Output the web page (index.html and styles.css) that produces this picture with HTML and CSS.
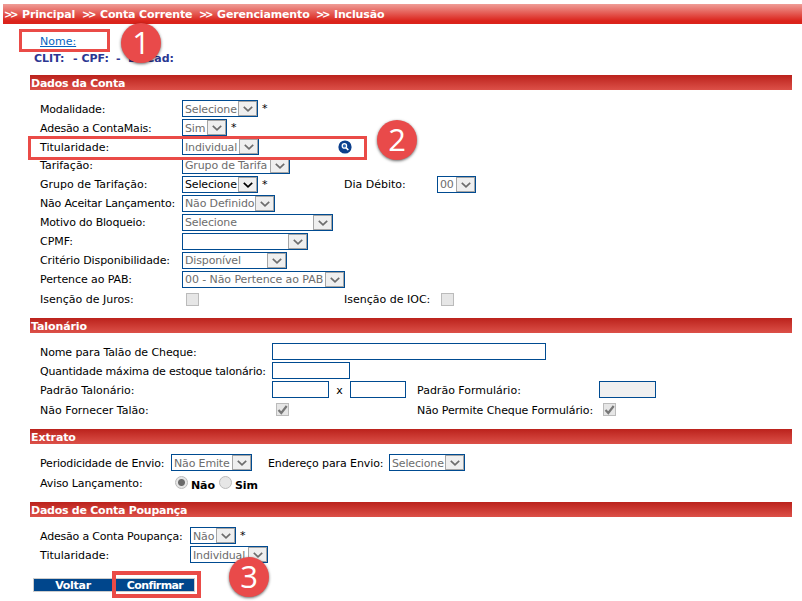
FILE: index.html
```html
<!DOCTYPE html>
<html lang="pt-BR">
<head>
<meta charset="utf-8">
<title>Inclusão</title>
<link rel="stylesheet" href="styles.css">
</head>
<body>
<svg class="defs" width="0" height="0"><defs>
<symbol id="chev" viewBox="0 0 10 6"><path d="M.8.8 5 4.8 9.2.8" fill="none" stroke="currentColor" stroke-width="1.7"/></symbol>
<symbol id="tick" viewBox="0 0 13 13"><path d="M2.5 7 5.3 10 10.7 3" fill="none" stroke="#777" stroke-width="2.2"/></symbol>
</defs></svg>
<nav class="crumbs"><i>&gt;&gt;</i><b class="c1">Principal</b><i>&gt;&gt;</i><b class="c2">Conta Corrente</b><i>&gt;&gt;</i><b class="c3">Gerenciamento</b><i>&gt;&gt;</i><b class="c4">Inclusão</b></nav>
<header class="client">
  <a>Nome:</a>
  <p><span>CLIT:</span><span>- CPF:</span><span>-</span><span>Dt Cad:</span></p>
</header>
<main>
<section class="conta">
  <h2>Dados da Conta</h2>
  <div class="row"><label class="t2">Modalidade:</label><div><span class="sel w76">Selecione<em><svg><use href="#chev"/></svg></em></span><s>*</s></div></div>
  <div class="row"><label class="t2">Adesão a ContaMais:</label><div><span class="sel w45">Sim<em><svg><use href="#chev"/></svg></em></span><s>*</s></div></div>
  <div class="row"><label>Titularidade:</label><div><span class="sel w77">Individual<em><svg><use href="#chev"/></svg></em></span></div>
    <svg class="lens" viewBox="0 0 14 14"><circle cx="7" cy="7" r="6.6" fill="#0b3f8c"/><circle cx="6.4" cy="5.9" r="2.2" fill="#2d68b4" stroke="#fff" stroke-width="1.2"/><path d="M8 7.6 10.3 10" stroke="#fff" stroke-width="1.6"/></svg></div>
  <div class="row"><label>Tarifação:</label><div><span class="sel w108">Grupo de Tarifa<em><svg><use href="#chev"/></svg></em></span></div></div>
  <div class="row"><label>Grupo de Tarifação:</label><div><span class="sel on w76">Selecione<em><svg><use href="#chev"/></svg></em></span><s>*</s></div><label>Dia Débito:</label><div><span class="sel w39">00<em><svg><use href="#chev"/></svg></em></span></div></div>
  <div class="row"><label class="t2">Não Aceitar Lançamento:</label><div><span class="sel w93">Não Definido<em><svg><use href="#chev"/></svg></em></span></div></div>
  <div class="row"><label class="t2">Motivo do Bloqueio:</label><div><span class="sel w151">Selecione<em><svg><use href="#chev"/></svg></em></span></div></div>
  <div class="row"><label>CPMF:</label><div><span class="sel w126"><em><svg><use href="#chev"/></svg></em></span></div></div>
  <div class="row"><label class="t1">Critério Disponibilidade:</label><div><span class="sel w105">Disponível<em><svg><use href="#chev"/></svg></em></span></div></div>
  <div class="row"><label class="t1">Pertence ao PAB:</label><div><span class="sel pab w163">00 - Não Pertence ao PAB<em><svg><use href="#chev"/></svg></em></span></div></div>
  <div class="row last"><label>Isenção de Juros:</label><div><span class="check"></span></div><label>Isenção de IOC:</label><div><span class="check"></span></div></div>
</section>
<section class="talonario">
  <h2>Talonário</h2>
  <div class="row"><label class="t1">Nome para Talão de Cheque:</label><div><span class="box w274"></span></div></div>
  <div class="row"><label class="t2">Quantidade máxima de estoque talonário:</label><div><span class="box w78"></span></div></div>
  <div class="row"><label>Padrão Talonário:</label><div><span class="box w57"></span><span class="times">x</span><span class="box w56"></span></div><label>Padrão Formulário:</label><div><span class="box off w57"></span></div></div>
  <div class="row last"><label>Não Fornecer Talão:</label><div><span class="check"><svg><use href="#tick"/></svg></span></div><label class="t1">Não Permite Cheque Formulário:</label><div><span class="check"><svg><use href="#tick"/></svg></span></div></div>
</section>
<section class="extrato">
  <h2>Extrato</h2>
  <div class="row"><label class="t2">Periodicidade de Envio:</label><div><span class="sel w81">Não Emite<em><svg><use href="#chev"/></svg></em></span></div><label class="t1">Endereço para Envio:</label><div><span class="sel w76">Selecione<em><svg><use href="#chev"/></svg></em></span></div></div>
  <div class="row last"><label class="t1">Aviso Lançamento:</label><div class="radios"><span class="radio on"></span><b>Não</b><span class="radio"></span><b>Sim</b></div></div>
</section>
<section class="poupanca">
  <h2>Dados de Conta Poupança</h2>
  <div class="row"><label class="t2">Adesão a Conta Poupança:</label><div><span class="sel w46">Não<em><svg><use href="#chev"/></svg></em></span><s>*</s></div></div>
  <div class="row"><label>Titularidade:</label><div><span class="sel w78">Individual<em><svg><use href="#chev"/></svg></em></span></div></div>
</section>
<div class="actions"><button>Voltar</button><button class="confirm">Confirmar</button></div>
</main>
<div class="frame f1"></div><div class="frame f2"></div><div class="frame f3"></div>
<div class="badge b1">1</div><div class="badge b2">2</div><div class="badge b3">3</div>
</body>
</html>
```
FILE: styles.css
```css
* { box-sizing: border-box; }
body {
  margin: 0;
  padding: 4px 0 0 3px;
  height: 601px;
  overflow: hidden;
  position: relative;
  background: #fff;
  color: #000;
  font: 11px/19px "DejaVu Sans", sans-serif;
  white-space: nowrap;
}
.defs { position: absolute; }
i, em { font-style: normal; }
s { text-decoration: none; margin-left: 4px; }
.crumbs {
  display: flex;
  height: 20px;
  padding-left: 1px;
  line-height: 21px;
  font-weight: bold;
  color: #fff;
  background: linear-gradient(#ef9d97, #db231b 85%);
}
.crumbs i { width: 18px; font-size: 10px; letter-spacing: -2.5px; }
.crumbs b { letter-spacing: -.15px; }
.c1 { width: 60px; }
.c2 { width: 99px; }
.c3 { width: 99px; }
.client { height: 51px; padding: 9px 0 0 31px; }
.client a {
  display: block;
  margin-left: 6px;
  line-height: 17px;
  color: #0563c1;
  text-decoration: underline;
}
.client p {
  display: flex;
  margin: 0;
  line-height: 17px;
  font-weight: bold;
  color: #2c3792;
}
.client p span:nth-child(1) { width: 39px; }
.client p span:nth-child(2) { width: 43px; }
.client p span:nth-child(3) { width: 12px; }
main { padding-left: 27px; }
h2 {
  width: 762px;
  height: 15px;
  margin: 0 0 9px;
  padding-left: 1px;
  font-size: 11px;
  line-height: 17px;
  letter-spacing: -.25px;
  color: #fff;
  background: linear-gradient(#bb221c, #dc5048);
}
.talonario h2, .extrato h2 { letter-spacing: -.1px; }
.row {
  display: grid;
  grid-template-rows: 19px;
  height: 19px;
  padding-left: 10px;
  align-items: center;
}
.row > div { display: flex; align-items: center; height: 19px; }
.row > label { padding-top: 2px; line-height: 17px; }
.row > .t1 { letter-spacing: -.1px; }
.row > .t2 { letter-spacing: -.19px; }
.conta { height: 243px; }
.conta .row { grid-template-columns: 142px 162px 93px 1fr; }
.conta .row:nth-of-type(n+4) > label { padding-top: 0; }
.talonario { height: 111px; }
.talonario .row { grid-template-columns: 232px 145px 182px 1fr; }
.extrato { height: 73px; }
.extrato .row { grid-template-columns: 131px 97px 121px 1fr; }
.poupanca { height: 76px; }
.poupanca .row { grid-template-columns: 150px 1fr; }
.row.last { height: 21px; grid-template-rows: 21px; }
.extrato .row.last { height: 20px; }
.conta .check, .talonario .check { margin-left: 4px; }
.sel {
  display: flex;
  flex: none;
  height: 17px;
  padding-left: 2px;
  border: 1px solid #004b91;
  line-height: 17px;
  letter-spacing: -.15px;
  color: #6d6d6d;
  background: #fff;
}
.conta .row:nth-of-type(n+4) .sel { line-height: 16px; }
.sel.on { color: #000; }
.sel.pab { letter-spacing: -.08px; }
.sel em {
  display: flex;
  flex: none;
  align-items: center;
  justify-content: center;
  width: 19px;
  height: 15px;
  margin-left: auto;
  border: 1px solid #a5a5a5;
  background: #efefef;
}
.sel em svg { width: 10px; height: 6px; }
.box { flex: none; height: 17px; border: 1px solid #004b91; background: #fff; }
.box.off { background: #f0f0f0; }
.times { width: 21px; padding-top: 1px; text-align: center; }
.w39 { width: 39px; }
.w45 { width: 45px; }
.w46 { width: 46px; }
.w56 { width: 56px; }
.w57 { width: 57px; }
.w76 { width: 76px; }
.w77 { width: 77px; }
.w78 { width: 78px; }
.w81 { width: 81px; }
.w93 { width: 93px; }
.w105 { width: 105px; }
.w108 { width: 108px; }
.w126 { width: 126px; }
.w151 { width: 151px; }
.w163 { width: 163px; }
.w274 { width: 274px; }
.check { width: 13px; height: 13px; border: 1px solid #bbb; background: #e6e6e6; }
.check svg { display: block; width: 13px; height: 13px; margin: -1px; }
.lens { width: 14px; height: 14px; margin-left: -6px; }
.radios b { margin: 6px 3px 0; letter-spacing: -.1px; }
.radio { width: 13px; height: 13px; margin: -1px 0 0 4px; border: 1px solid #bbb; border-radius: 50%; background: #e6e6e6; }
.radios b + .radio { margin-left: 1px; }
.radio.on { background: radial-gradient(#6b6b6b 3px, #e6e6e6 4px); }
.actions { display: flex; gap: 2px; padding-left: 3px; }
.actions button {
  width: 80px;
  height: 14px;
  padding: 1px 0 0;
  border: 1px solid #ccc;
  font: bold 11px/12px "DejaVu Sans", sans-serif;
  letter-spacing: -.3px;
  color: #fff;
  background: #00468c;
}
.actions .confirm { letter-spacing: -.6px; }
.frame { position: absolute; border: 3px solid #ea4b47; }
.f1 { left: 19px; top: 29px; width: 91px; height: 23px; }
.f2 { left: 28px; top: 136px; width: 339px; height: 24px; }
.f3 { left: 112px; top: 571px; width: 89px; height: 27px; border-width: 4px; }
.badge {
  position: absolute;
  width: 40px;
  height: 40px;
  border-radius: 50%;
  font: 31px/39px "Open Sans", sans-serif;
  text-align: center;
  color: #fff;
  background: #e94a4a;
  box-shadow: 0 1px 3px rgba(0, 0, 0, .6);
}
.b1 { left: 121px; top: 23px; }
.b2 { left: 377px; top: 120px; }
.b3 { left: 229px; top: 557px; }
```
